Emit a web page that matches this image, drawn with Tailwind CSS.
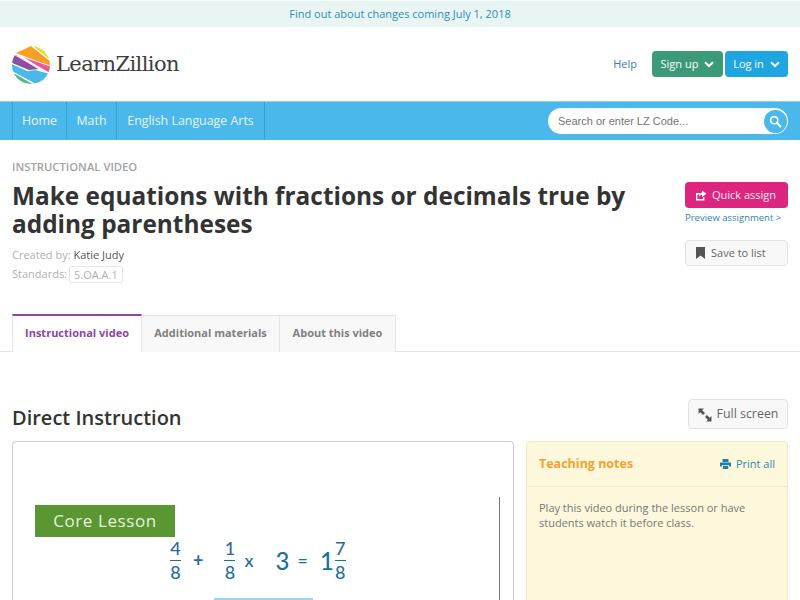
<!DOCTYPE html>
<html lang="en">
<head>
    <meta charset="UTF-8">
    <title>LearnZillion</title>
    <script src="https://cdn.jsdelivr.net/npm/@tailwindcss/browser@4"></script>
</head>
<body class="bg-white font-['Open_Sans',sans-serif] h-[600px] overflow-hidden">

    <!-- Notice -->
    <div class="h-[27px] bg-[#e9f5f2] border-t border-[#f5fafa] flex items-center justify-center text-[11px] text-[#2a8fb5]">
        Find out about changes coming July 1, 2018
    </div>

    <!-- Header -->
    <div class="h-[74px] flex items-center justify-between pl-3 pr-3">
        <div class="flex items-center gap-[6px] mt-[2px]">
            <svg width="38" height="38" viewBox="0 0 38 38">
                <defs><clipPath id="logoClip"><circle cx="19" cy="19" r="19"/></clipPath></defs>
                <g clip-path="url(#logoClip)">
                    <rect width="38" height="38" fill="#fff"/>
                    <polygon points="21,0 38,0 38,14" fill="#ecd93c"/>
                    <polygon points="4,7 19,0 38,15 38,20" fill="#f7a024"/>
                    <polygon points="0,9 4,9 27,23 17,24 0,17" fill="#8f4ea5"/>
                    <polygon points="10,10 38,20 38,27 24,19" fill="#e8589f"/>
                    <polygon points="0,18 16,25 23,24 38,28 30,38 24,38 0,25" fill="#4ab9ea"/>
                    <polygon points="0,26 21,38 6,38" fill="#57b98a"/>
                </g>
                <path d="M20 0 L38 14.5 M3 8 L38 20 M3 9 L27 23 M0 17.5 L16 25 M0 25.5 L22 38.5" stroke="#fff" stroke-width="0.8" fill="none"/>
            </svg>
            <span class="font-['DejaVu_Serif',serif] text-[21px] text-[#3d3d3d] tracking-[-0.6px]">LearnZillion</span>
        </div>
        <div class="flex items-center">
            <a class="text-[11px] text-[#2f7fa8] mr-[15px]">Help</a>
            <button class="h-[26px] w-[71px] mr-[2px] rounded-[4px] bg-[#3d9a78] text-white text-[11px] flex items-center justify-center gap-[6px]">
                Sign up
                <svg width="10" height="7" viewBox="0 0 10 7"><path d="M1 1.2 L5 5 L9 1.2" stroke="#fff" stroke-width="2" fill="none"/></svg>
            </button>
            <button class="h-[26px] w-[63px] rounded-[4px] bg-[#1fa5e0] text-white text-[11px] flex items-center justify-center gap-[6px]">
                Log in
                <svg width="10" height="7" viewBox="0 0 10 7"><path d="M1 1.2 L5 5 L9 1.2" stroke="#fff" stroke-width="2" fill="none"/></svg>
            </button>
        </div>
    </div>

    <!-- Nav -->
    <div class="h-[39px] bg-[#4bb8ec] flex items-stretch justify-between pl-3 pr-3 border-t border-[#8fd3f3]">
        <div class="flex border-l border-[#2ea3dc] text-[12.4px] text-[#e8f6fd]">
            <a class="w-[54px] flex items-center justify-center border-r border-[#2ea3dc]">Home</a>
            <a class="w-[50px] flex items-center justify-center border-r border-[#2ea3dc]">Math</a>
            <a class="w-[148px] flex items-center justify-center border-r border-[#2ea3dc]">English Language Arts</a>
        </div>
        <div class="w-[240px] h-[26px] mt-[6px] bg-white rounded-full flex items-center justify-between pl-[10px] pr-[1px]">
            <span class="font-['Liberation_Sans',sans-serif] text-[11px] text-[#757575]">Search or enter LZ Code...</span>
            <span class="w-[23px] h-[23px] rounded-full bg-[#4bb8ec] flex items-center justify-center">
                <svg width="13" height="13" viewBox="0 0 13 13"><circle cx="5.2" cy="5.2" r="3.6" stroke="#fff" stroke-width="1.6" fill="none"/><path d="M8 8 L12 12" stroke="#fff" stroke-width="2"/></svg>
            </span>
        </div>
    </div>

    <!-- Title block -->
    <div class="flex justify-between pl-3 pr-3 pt-5 h-[175px]">
        <div class="w-[650px]">
            <div class="text-[11.25px] leading-[14px] font-semibold text-[#a3a3a3]">INSTRUCTIONAL VIDEO</div>
            <h1 class="mt-2 text-[24.4px] leading-[28px] font-bold text-[#333]">Make equations with fractions or decimals true by adding parentheses</h1>
            <div class="mt-[9px] text-[11px] leading-[16px] text-[#b0b0b0]">Created by: <span class="text-[#555]">Katie Judy</span></div>
            <div class="mt-[2px] text-[11px] leading-[18px] text-[#b0b0b0] flex items-center gap-[2px]">Standards: <span class="border border-[#e6e6e6] rounded-[2px] px-[4px] leading-[15px] text-[#b0b0b0]">5.OA.A.1</span></div>
        </div>
        <div class="w-[103px] pt-[22px]">
            <button class="w-[103px] h-[26px] pl-[10px] rounded-[4px] bg-[#dd2580] text-white/90 text-[11px] flex items-center gap-[5px]">
                <svg width="12" height="11" viewBox="0 0 12 11"><path d="M1 3 H5 V4.4 H2.4 V9 H8 V7 H9.4 V10.4 H1 Z" fill="#fff"/><path d="M7 0.5 L11.5 3.7 L7 7 V5 C5.5 5 4.6 5.6 4 6.8 C4 4.2 5.2 2.7 7 2.5 Z" fill="#fff"/></svg>
                Quick assign
            </button>
            <div class="mt-[2px] text-[9.5px] leading-[16px] text-[#2f86a8] whitespace-nowrap">Preview assignment &gt;</div>
            <button class="mt-[14px] w-[103px] h-[26px] pl-[10px] rounded-[4px] bg-[#f8f8f8] border border-[#e2e2e2] text-[#666] text-[11px] flex items-center gap-[6px]">
                <svg width="9" height="12" viewBox="0 0 9 12"><path d="M0 0 H9 V12 L4.5 8.6 L0 12 Z" fill="#555"/></svg>
                Save to list
            </button>
        </div>
    </div>

    <!-- Tabs -->
    <div class="h-[37px] border-b border-[#e5e5e5] pl-3 flex items-stretch text-[11px] font-bold">
        <a class="w-[130px] h-[38px] -mt-px pb-px bg-white border-t-2 border-t-[#8e44a8] border-x border-x-[#e5e5e5] text-[#8e44a8] flex items-center justify-center">Instructional video</a>
        <a class="w-[138px] h-[37px] pb-px bg-[#f8f8f8] border-t border-r border-[#e5e5e5] text-[#808080] flex items-center justify-center">Additional materials</a>
        <a class="w-[116px] h-[37px] pb-px bg-[#f8f8f8] border-t border-r border-[#e5e5e5] text-[#808080] flex items-center justify-center">About this video</a>
    </div>

    <!-- Direct Instruction -->
    <div class="flex items-center justify-between pl-3 pr-3 mt-[47px] h-[30px]">
        <h2 class="pt-2 text-[20px] font-semibold text-[#333]">Direct Instruction</h2>
        <button class="w-[100px] h-[30px] pt-px rounded-[4px] bg-[#f8f8f8] border border-[#e2e2e2] text-[#666] text-[12.4px] flex items-center justify-center gap-[5px]">
            <svg width="14" height="14" viewBox="0 0 13 13"><path d="M0.5 0.5 H5.5 L3.9 2.1 L6.5 4.7 L4.7 6.5 L2.1 3.9 L0.5 5.5 Z M12.5 12.5 H7.5 L9.1 10.9 L6.5 8.3 L8.3 6.5 L10.9 9.1 L12.5 7.5 Z" fill="#555"/></svg>
            Full screen
        </button>
    </div>

    <div class="flex gap-3 pl-3 pr-3 mt-[12px]">
        <!-- Video -->
        <div class="w-[502px] h-[170px] border border-[#ccc] border-b-0 rounded-t-[4px] bg-white relative overflow-hidden">
            <div class="absolute left-[22px] top-[63px] w-[140px] h-[32px] bg-[#5a9632] text-[#e8f3df] text-[17px] tracking-[0.6px] flex items-center justify-center">Core Lesson</div>
            <div class="absolute right-[13px] top-[55px] bottom-0 w-px bg-[#777]"></div>
            <div class="absolute left-[157px] top-[97px] flex items-center text-[#1f6f9c] text-[18px] leading-[19px] font-medium font-['Lato',sans-serif]">
                <span class="flex flex-col items-center w-[11px]"><span>4</span><span class="h-px my-[2px] w-full bg-[#1f6f9c]"></span><span>8</span></span>
                <span class="ml-[12px] font-bold">+</span>
                <span class="ml-[21px] flex flex-col items-center w-[11px]"><span>1</span><span class="h-px my-[2px] w-full bg-[#1f6f9c]"></span><span>8</span></span>
                <span class="ml-[9px]">x</span>
                <span class="ml-[22px] text-[24px]">3</span>
                <span class="ml-[8px]">=</span>
                <span class="ml-[12px] text-[24px]">1</span>
                <span class="ml-[1px] flex flex-col items-center w-[11px]"><span>7</span><span class="h-px my-[2px] w-full bg-[#1f6f9c]"></span><span>8</span></span>
            </div>
            <div class="absolute left-[201px] top-[156px] w-[99px] h-[2px] bg-[#9cd4ee]"></div>
        </div>

        <!-- Notes -->
        <div class="w-[262px] h-[170px] bg-[#fdf8dc] border border-[#f1e8c4] border-b-0 rounded-t-[4px]">
            <div class="h-[45px] border-b border-[#f1e8c4] flex items-center justify-between pl-3 pr-3">
                <span class="text-[12.5px] font-bold text-[#f4a12e]">Teaching notes</span>
                <span class="text-[11px] text-[#2f86a8] flex items-center gap-[5px]">
                    <svg width="11" height="10" viewBox="0 0 11 10"><path d="M2.5 0 H8.5 V3 H2.5 Z M0 3.6 H11 V7.6 H9 V6 H2 V7.6 H0 Z M2.8 6.8 H8.2 V10 H2.8 Z" fill="#1f7fa8"/></svg>
                    Print all
                </span>
            </div>
            <p class="pl-3 pr-3 pt-[13px] text-[11px] leading-[15px] text-[#777]">Play this video during the lesson or have students watch it before class.</p>
        </div>
    </div>

</body>
</html>
